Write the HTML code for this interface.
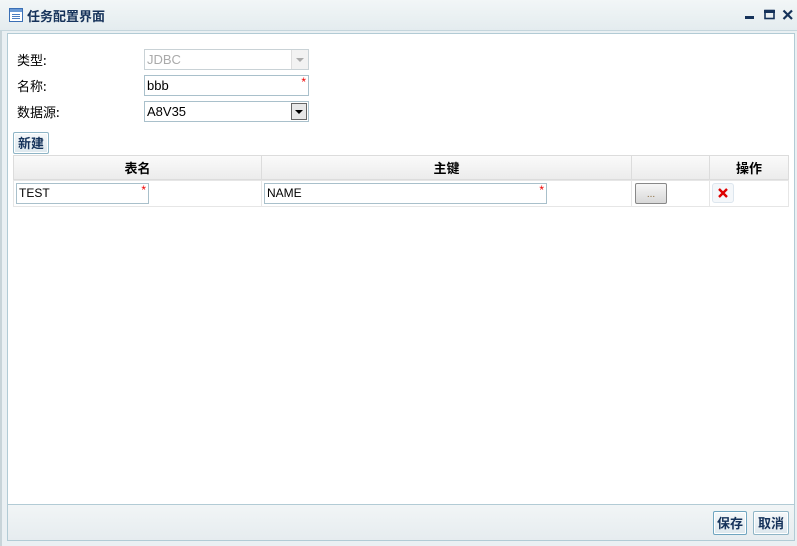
<!DOCTYPE html>
<html><head><meta charset="utf-8"><style>
*{margin:0;padding:0;box-sizing:border-box}
body{width:797px;height:546px;overflow:hidden;background:#eaf0f3;font-family:"Liberation Sans","Noto Sans CJK SC",sans-serif;font-size:12px;position:relative;color:#000}
.abs{position:absolute}
.title{left:0;top:0;width:797px;height:31px;background:linear-gradient(#f2f6f7,#e4ecef);border-bottom:1px solid #c5d6dd}
.ttext{left:27px;top:6px;font-size:13px;font-weight:bold;color:#15325a;font-family:"Noto Sans CJK SC",sans-serif}
.panel{left:7px;top:33px;width:788px;height:508px;border:1px solid #b2cbd5;background:#fff}
.footer{left:7px;top:504px;width:788px;height:37px;border:1px solid #b2cbd5;background:linear-gradient(#f1f5f6,#e6ecef)}
.lbl{left:17px;font-size:13px;font-family:"Noto Sans CJK SC",sans-serif}
.inp{left:144px;width:165px;height:21px;border:1px solid #a9c0cb;background:#fff;font-size:13px;padding:2px 0 0 2px}
.star{color:#e00;font-size:12px;position:absolute;right:2px;top:-1px}
.btn{border:1px solid #8fb5c6;border-radius:2px;background:linear-gradient(#f5f8fa,#dde8ee);font-weight:bold;color:#15325a;font-size:13px;text-align:center;font-family:"Noto Sans CJK SC",sans-serif;box-shadow:inset 0 0 0 1px #fff}
.hd{top:155px;height:25px;background:linear-gradient(#fafafa,#ececec);border:1px solid #dcdcdc;font-weight:bold;font-size:13px;text-align:center;line-height:23px;font-family:"Noto Sans CJK SC",sans-serif}
.rw{top:180px;height:27px;border:1px solid #e6e6e6;background:#fff}
</style></head><body>
<div class="abs" style="left:0;top:0;width:2px;height:546px;background:#c8d4d9"></div>
<div class="abs title"></div>
<svg class="abs" style="left:9px;top:8px" width="14" height="14"><rect x="0.5" y="0.5" width="13" height="13" fill="#fff" stroke="#3a6fb5"/><rect x="1" y="1" width="12" height="3" fill="#6a9ad6"/><path d="M3 6.5h8M3 8.5h8M3 10.5h8" stroke="#4a7cc0"/></svg>
<div class="abs ttext">任务配置界面</div>
<svg class="abs" style="left:740px;top:0" width="57" height="30"><rect x="5" y="16" width="9" height="3" fill="#15325a"/><rect x="25" y="10.5" width="9" height="8" fill="none" stroke="#15325a" stroke-width="1.6"/><rect x="24" y="10" width="11" height="3" fill="#15325a"/><path d="M43.5 10.5l8.5 8.5M52 10.5l-8.5 8.5" stroke="#15325a" stroke-width="2.2"/></svg>
<div class="abs panel"></div>
<div class="abs lbl" style="top:50px">类型:</div>
<div class="abs lbl" style="top:76px">名称:</div>
<div class="abs lbl" style="top:102px">数据源:</div>
<div class="abs inp" style="top:49px;color:#aaa;border-color:#c9d2d6">JDBC<div class="abs" style="right:0;top:0;width:17px;height:19px;border-left:1px solid #ddd;background:#f2f2f2"><div class="abs" style="left:4px;top:8px;border:4px solid transparent;border-top:4px solid #aaa;border-bottom:0"></div></div></div>
<div class="abs inp" style="top:75px">bbb<span class="star">*</span></div>
<div class="abs inp" style="top:101px">A8V35<div class="abs" style="right:1px;top:1px;width:16px;height:17px;border:1px solid #666;background:#e8e8e8"><div class="abs" style="left:3px;top:6px;border:4px solid transparent;border-top:4px solid #000;border-bottom:0"></div></div></div>
<div class="abs btn" style="left:13px;top:132px;width:36px;height:22px;line-height:19px">新建</div>
<div class="abs hd" style="left:13px;width:249px">表名</div>
<div class="abs hd" style="left:261px;width:371px">主键</div>
<div class="abs hd" style="left:631px;width:79px"></div>
<div class="abs hd" style="left:709px;width:80px">操作</div>
<div class="abs rw" style="left:13px;width:249px"></div>
<div class="abs rw" style="left:261px;width:371px"></div>
<div class="abs rw" style="left:631px;width:79px"></div>
<div class="abs rw" style="left:709px;width:80px"></div>
<div class="abs inp" style="left:16px;top:183px;width:133px;height:21px;font-size:12px">TEST<span class="star">*</span></div>
<div class="abs inp" style="left:264px;top:183px;width:283px;height:21px;font-size:12px">NAME<span class="star">*</span></div>
<div class="abs" style="left:635px;top:183px;width:32px;height:21px;border:1px solid #888;border-radius:2px;background:linear-gradient(#f6f6f6,#d8d8d8);text-align:center;font-size:10px;color:#8a6a3a;line-height:22px">...</div>
<div class="abs" style="left:712px;top:183px;width:22px;height:20px;border:1px solid #dde6ee;border-radius:3px;background:#f4f7fa"><svg width="20" height="18"><path d="M6 5l8 8M14 5l-8 8" stroke="#d00" stroke-width="2.4"/></svg></div>
<div class="abs footer"></div>
<div class="abs btn" style="left:713px;top:511px;width:34px;height:24px;line-height:22px;border-color:#6fa5c0">保存</div>
<div class="abs btn" style="left:753px;top:511px;width:36px;height:24px;line-height:22px">取消</div>
</body></html>
